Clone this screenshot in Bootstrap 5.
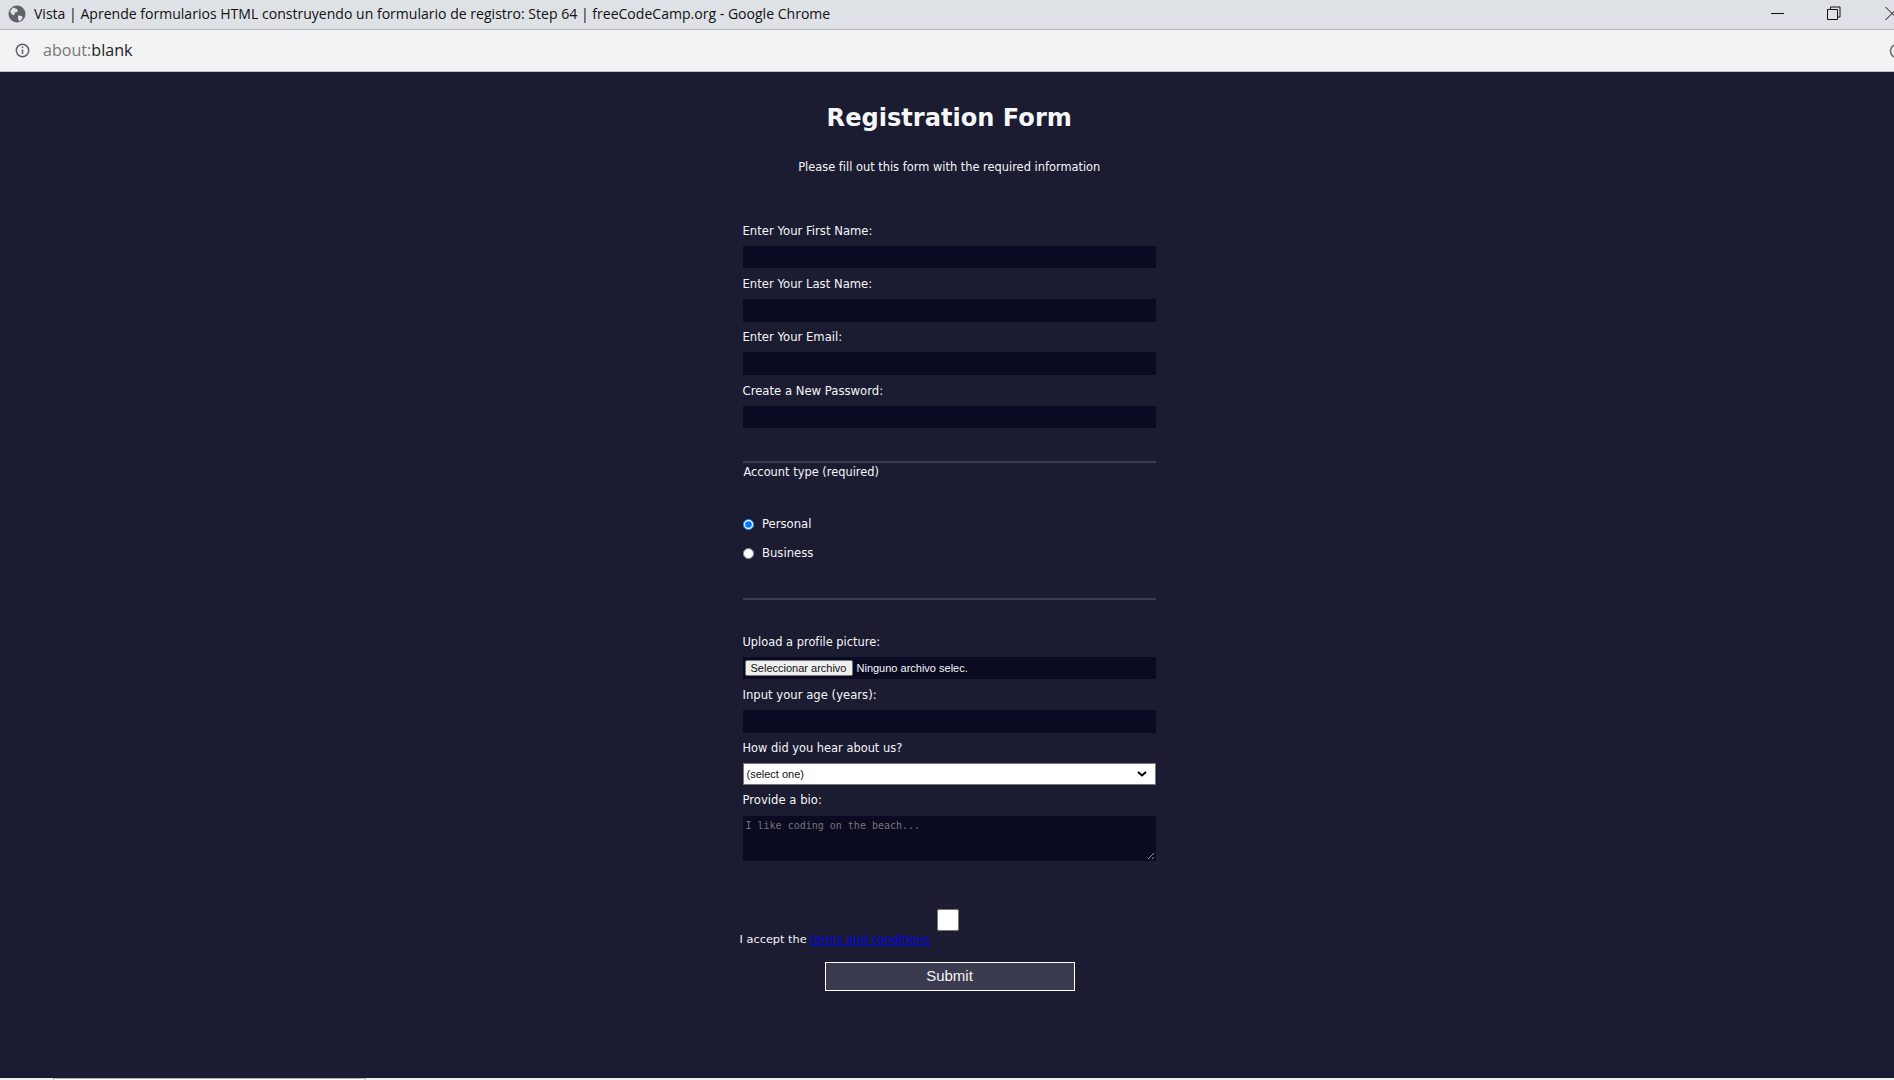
<!DOCTYPE html>
<html lang="es">
<head>
<meta charset="utf-8">
<title>Registration Form</title>
<link href="https://cdn.jsdelivr.net/npm/bootstrap@5.3.0/dist/css/bootstrap.min.css" rel="stylesheet">
<style>
html, body { height: 1080px; overflow: hidden; }
body { background: #1b1b32; font-family: "DejaVu Sans", sans-serif; }
.win-title { height: 30px; padding-bottom: 2px; background: #dee1e6; border-bottom: 1px solid #b4b6ba; color: #111; font-family: "Open Sans", sans-serif; font-size: 14.05px; overflow: hidden; }
.win-title .title-text { margin-left: 8px; }
.win-ctrl { align-self: flex-start; }
.addr-bar { height: 42px; background: #f1f3f4; border-bottom: 1px solid #bfc1c4; overflow: hidden; }
.addr-text { font-family: "Open Sans", sans-serif; font-size: 16.1px; color: #222; margin-left: 13px; }
.addr-text span { color: #777; }
.page-area { height: 1006px; background: #1b1b32; color: #f5f6f7; padding-left: 4.500px; }
.page-inner { width: 413.500px; font-size: 11.65px; line-height: 15px; }
.tight-text { font-size: 11.42px; }
.page-title { font-size: 24.1px; font-weight: 700; line-height: 30px; margin: 0; padding-top: 31px; white-space: nowrap; }
.page-sub { margin: 0; padding-top: 27px; padding-bottom: 40px; white-space: nowrap; }
.field-label { display: block; margin: 0; height: 30.67px; padding-top: 8.600px; line-height: 15px; white-space: nowrap; }
.field-input.form-control { display: block; height: 22.67px; min-height: 0; width: 100%; background: #0a0a23; border: 1px solid #0a0a23; border-radius: 0; padding: 0 2px; color: #f5f6f7; }
.rule-line { height: 2px; background: #3b3b4f; }
.legend-text { padding-left: 1px; height: 15px; margin-top: 2px; }
.radio-row { display: flex; align-items: center; height: 15px; margin: 0; }
.radio-row input { width: 11px; height: 11px; margin: 0 8.500px 0 0; }
.file-box { height: 22px; background: #0a0a23; display: flex; align-items: center; padding-left: 2px; font-family: "Liberation Sans", sans-serif; font-size: 11px; white-space: nowrap; }
.file-btn { width: 108px; height: 16px; background: #efefef; border: 1px solid #767676; border-radius: 2px; color: #111; font-size: 11px; padding: 0; line-height: 14px; margin-right: 4px; }
.sel-box.form-select { height: 21.500px; min-height: 0; border-radius: 0; border: 1px solid #767676; padding: 0 3px; font-family: "Liberation Sans", sans-serif; font-size: 11px; color: #111; background-image: url("data:image/svg+xml,%3csvg xmlns='http://www.w3.org/2000/svg' viewBox='0 0 10 6'%3e%3cpath d='M1 1l4 3.500 4-3.500' fill='none' stroke='%23000' stroke-width='2'/%3e%3c/svg%3e"); background-size: 10px 6px; background-position: right 8px center; }
.bio-box.form-control { display: block; width: 100%; height: 45.500px; min-height: 0; background: #0a0a23; border: 1px solid #0a0a23; border-radius: 0; padding: 3px 2px 1px; font-family: "DejaVu Sans Mono", monospace; font-size: 10px; line-height: 12px; color: #f5f6f7; resize: vertical; }
.bio-box.form-control::placeholder { color: #757575; opacity: 1; }
.terms-row { width: 420px; margin-left: -3px; margin-top: 48px; height: 30px; font-size: 11.35px; display: flex; align-items: flex-start; white-space: nowrap; }
.terms-row span { margin-top: 23px; }
.terms-row a { color: #00f; }
.terms-box { width: 22px; height: 22px; margin: 0 0 0 7px; }
.send-btn { display: block; width: 250px; height: 29px; margin: 23px 0 0 82px; background: #3b3b4f; border: 1.500px solid #fff; border-radius: 0; color: #f5f6f7; font-family: "Liberation Sans", sans-serif; font-size: 15px; padding: 0; }
.send-btn:hover { background: #3b3b4f; color: #f5f6f7; border-color: #fff; }
.foot-strip { height: 2px; background: #f0f0f0; padding-left: 53px; }
.foot-tab { width: 313px; height: 2px; background: #fff; border: 1px solid #b5b5b5; border-bottom: 0; }
</style>
</head>
<body>
<div class="win-title d-flex align-items-center">
  <svg class="ms-2 flex-shrink-0" width="18" height="18" viewBox="0 0 18 18"><circle cx="9" cy="9" r="8.500" fill="#5f6368"/><path d="M5 2.500 9 4l1 2.500-3 1-1 3-2-1-2-3zM10 10.500l4 .5 .5 2.500-3 3-1.500-2.500z" fill="#dee1e6"/></svg>
  <span class="title-text flex-grow-1 text-nowrap">Vista | Aprende formularios HTML construyendo un formulario de registro: Step 64 | freeCodeCamp.org - Google Chrome</span>
  <svg class="win-ctrl flex-shrink-0" width="124" height="29" viewBox="0 0 124 29"><path d="M1 13.500H14" stroke="#111" fill="none"/><path d="M57.500 9.500h10v10h-10zM60.500 9.500V7h9.500v10h-2.500" stroke="#111" fill="none"/><path d="M115.500 7 128.500 20M128.500 7 115.500 20" stroke="#111" fill="none"/></svg>
</div>
<div class="addr-bar d-flex align-items-center">
  <svg class="flex-shrink-0" style="margin-left:15px" width="15" height="15" viewBox="0 0 15 15"><circle cx="7.500" cy="7.500" r="6.200" fill="none" stroke="#5f6368" stroke-width="1.500"/><path d="M7.500 6.500v4.500M7.500 3.500v1.500" stroke="#5f6368" stroke-width="1.500"/></svg>
  <div class="addr-text flex-grow-1"><span>about:</span>blank</div>
  <svg class="flex-shrink-0" width="5" height="16" viewBox="0 0 5 16"><circle cx="8" cy="8" r="6.500" fill="none" stroke="#777" stroke-width="1.800"/></svg>
</div>
<main class="page-area d-flex justify-content-center">
  <div class="page-inner">
    <h1 class="page-title text-center">Registration Form</h1>
    <p class="page-sub tight-text text-center">Please fill out this form with the required information</p>
    <form action="#" onsubmit="return false">
      <label class="field-label" for="f1">Enter Your First Name:</label>
      <input class="field-input form-control" id="f1" type="text">
      <label class="field-label" for="f2">Enter Your Last Name:</label>
      <input class="field-input form-control" id="f2" type="text">
      <label class="field-label" for="f3">Enter Your Email:</label>
      <input class="field-input form-control" id="f3" type="email">
      <label class="field-label" for="f4">Create a New Password:</label>
      <input class="field-input form-control" id="f4" type="password">

      <div class="rule-line" style="margin-top:33px"></div>
      <div class="legend-text tight-text">Account type (required)</div>
      <label class="radio-row" style="margin-top:37px"><input type="radio" name="acct" checked>Personal</label>
      <label class="radio-row" style="margin-top:14px"><input type="radio" name="acct">Business</label>
      <div class="rule-line" style="margin-top:37px"></div>

      <label class="field-label tight-text" style="margin-top:26.500px" for="f5">Upload a profile picture:</label>
      <div class="file-box" id="f5"><button type="button" class="file-btn">Seleccionar archivo</button>Ninguno archivo selec.</div>
      <label class="field-label" for="f6">Input your age (years):</label>
      <input class="field-input form-control" id="f6" type="number">
      <label class="field-label tight-text" for="f7">How did you hear about us?</label>
      <select class="sel-box form-select" id="f7"><option>(select one)</option></select>
      <label class="field-label" for="f8">Provide a bio:</label>
      <textarea class="bio-box form-control" id="f8" placeholder="I like coding on the beach..."></textarea>

      <div class="terms-row"><span>I accept the <a href="#">terms and conditions</a></span><input class="terms-box" type="checkbox"></div>
      <button class="btn send-btn" type="submit">Submit</button>
    </form>
  </div>
</main>
<div class="foot-strip"><div class="foot-tab"></div></div>
<script src="https://cdn.jsdelivr.net/npm/bootstrap@5.3.0/dist/js/bootstrap.bundle.min.js"></script>
</body>
</html>
